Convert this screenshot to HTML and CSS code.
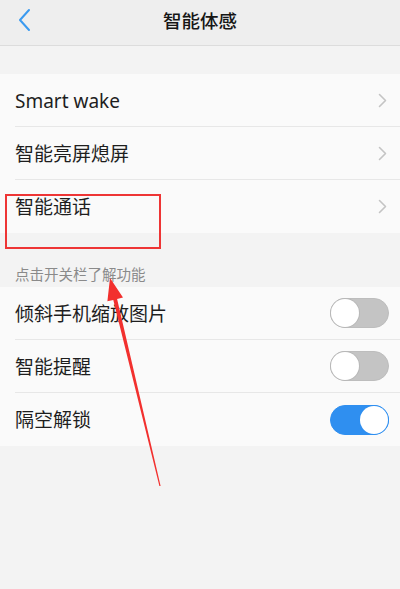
FILE: index.html
```html
<!DOCTYPE html>
<html lang="zh-CN">
<head>
<meta charset="utf-8">
<title>智能体感</title>
<link rel="stylesheet" href="styles.css">
</head>
<body>
<div class="page">
  <header class="nav">
    <svg class="back" width="14" height="24" viewBox="0 0 14 24"><path d="M11 2 L2 12 L11 22" fill="none" stroke="#3a9af0" stroke-width="2" stroke-linecap="round" stroke-linejoin="round"/></svg>
    <h1 class="title">智能体感</h1>
  </header>
  <div class="gap"></div>
  <ul class="list">
    <li class="row"><span class="label">Smart wake</span><svg class="chev" width="9" height="15" viewBox="0 0 9 15"><path d="M1.5 1.5 L7.5 7.5 L1.5 13.5" fill="none" stroke="#c4c4c4" stroke-width="1.6" stroke-linecap="round" stroke-linejoin="round"/></svg></li>
    <li class="row"><span class="label">智能亮屏熄屏</span><svg class="chev" width="9" height="15" viewBox="0 0 9 15"><path d="M1.5 1.5 L7.5 7.5 L1.5 13.5" fill="none" stroke="#c4c4c4" stroke-width="1.6" stroke-linecap="round" stroke-linejoin="round"/></svg></li>
    <li class="row"><span class="label">智能通话</span><svg class="chev" width="9" height="15" viewBox="0 0 9 15"><path d="M1.5 1.5 L7.5 7.5 L1.5 13.5" fill="none" stroke="#c4c4c4" stroke-width="1.6" stroke-linecap="round" stroke-linejoin="round"/></svg></li>
  </ul>
  <div class="section">点击开关栏了解功能</div>
  <ul class="list">
    <li class="row"><span class="label">倾斜手机缩放图片</span><span class="toggle"></span></li>
    <li class="row"><span class="label">智能提醒</span><span class="toggle"></span></li>
    <li class="row"><span class="label">隔空解锁</span><span class="toggle on"></span></li>
  </ul>
  <div class="mark-box"></div>
  <svg class="arrow" width="400" height="589" viewBox="0 0 400 589">
    <polygon points="110,278 123,297.5 117.1,298.9 160.6,485.9 159.4,486.1 113.3,299.9 107.4,301.3" fill="#f2302e"/>
  </svg>
</div>
</body>
</html>
```
FILE: styles.css
```css
* { box-sizing: border-box; margin: 0; padding: 0; }
html, body { width: 400px; height: 589px; overflow: hidden; }
body {
  background: #f3f3f3;
  font-family: "Noto Sans", "Noto Sans CJK SC", sans-serif;
  color: #1e1e1e;
}
.page { position: relative; width: 400px; height: 589px; }
.nav {
  height: 46px;
  background: #eeeeee;
  border-bottom: 1px solid #dcdcdc;
  display: flex;
  align-items: center;
  justify-content: center;
  position: relative;
}
.back { position: absolute; left: 18px; top: 8px; }
.title { font-size: 18.5px; font-weight: 500; color: #161616; line-height: 1; margin-top: -3px; }
.gap { height: 28px; }
.list { list-style: none; background: #fafafa; }
.row {
  height: 53px;
  margin-left: 15px;
  padding-right: 11px;
  display: flex;
  align-items: center;
  justify-content: space-between;
  border-bottom: 1px solid #e7e7e7;
}
.row:last-child { border-bottom: none; }
.label { font-size: 19px; line-height: 1; margin-top: 2px; }
.chev { margin-right: 2px; }
.section {
  height: 54px;
  display: flex;
  align-items: flex-end;
  padding: 0 0 3px 15px;
  font-size: 14.5px;
  color: #8a8a8a;
  line-height: 20px;
}
.toggle {
  width: 59px; height: 30px;
  border-radius: 15px;
  background: #c4c4c4;
  border: 1px solid #bdbdbd;
  position: relative;
}
.toggle::after {
  content: "";
  position: absolute;
  left: 0; top: 0;
  width: 28px; height: 28px;
  border-radius: 50%;
  background: #fff;
  box-shadow: 0 0 0 1px #b8b8b8;
}
.toggle.on { background: #2f8ff0; border-color: #2f8ff0; }
.toggle.on::after { left: auto; right: 0; box-shadow: 0 0 0 1px #2f8ff0; }
.mark-box {
  position: absolute;
  left: 5px; top: 194px;
  width: 156px; height: 55px;
  border: 2px solid #ee3535;
}
.arrow { position: absolute; left: 0; top: 0; pointer-events: none; }
```
